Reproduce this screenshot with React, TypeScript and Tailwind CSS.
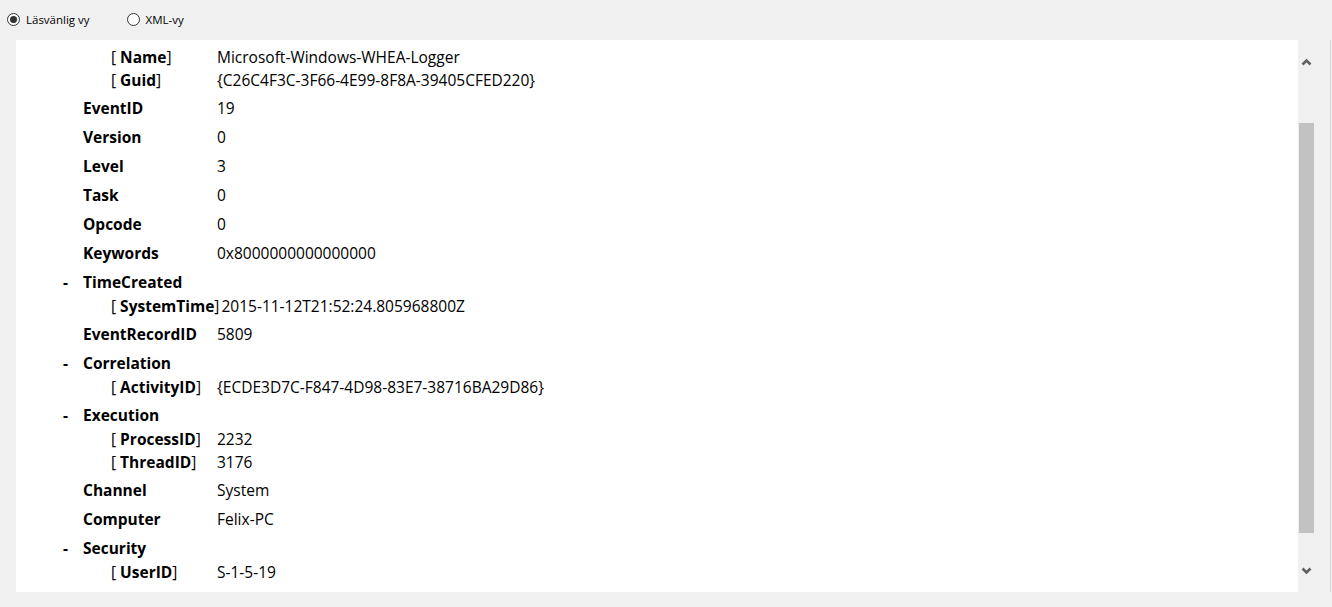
import React from "react";

type Child = { label: string; value: string };
type Item = { label: string; value?: string; dash?: boolean; children?: Child[] };

const items: Item[] = [
  { label: "EventID", value: "19" },
  { label: "Version", value: "0" },
  { label: "Level", value: "3" },
  { label: "Task", value: "0" },
  { label: "Opcode", value: "0" },
  { label: "Keywords", value: "0x8000000000000000" },
  { label: "TimeCreated", dash: true, children: [{ label: "SystemTime", value: "2015-11-12T21:52:24.805968800Z" }] },
  { label: "EventRecordID", value: "5809" },
  { label: "Correlation", dash: true, children: [{ label: "ActivityID", value: "{ECDE3D7C-F847-4D98-83E7-38716BA29D86}" }] },
  {
    label: "Execution",
    dash: true,
    children: [
      { label: "ProcessID", value: "2232" },
      { label: "ThreadID", value: "3176" },
    ],
  },
  { label: "Channel", value: "System" },
  { label: "Computer", value: "Felix-PC" },
  { label: "Security", dash: true, children: [{ label: "UserID", value: "S-1-5-19" }] },
];

const font = { fontFamily: '"Open Sans", "Noto Sans", sans-serif' };

function ChildRow({ c }: { c: Child }) {
  return (
    <div className="flex h-[23px] items-center">
      <div className="pl-[95px] min-w-[201px] pr-[2px] whitespace-nowrap">
        <span>[ </span>
        <span className="font-bold">{c.label}</span>
        <span>]</span>
      </div>
      <div className="whitespace-nowrap">{c.value}</div>
    </div>
  );
}

function Radio({ checked, label }: { checked?: boolean; label: string }) {
  return (
    <div className="flex items-center gap-[6px]">
      <div className="w-[13px] h-[13px] rounded-full border border-[#333] bg-white flex items-center justify-center">
        {checked && <div className="w-[7px] h-[7px] rounded-full bg-[#333]" />}
      </div>
      <span className="text-[11.5px] text-black">{label}</span>
    </div>
  );
}

function Chevron({ up }: { up?: boolean }) {
  return (
    <svg width="11" height="8" viewBox="0 0 11 8">
      <polyline
        points={up ? "1.5,6.5 5.5,2.5 9.5,6.5" : "1.5,1.5 5.5,5.5 9.5,1.5"}
        fill="none"
        stroke="#606060"
        strokeWidth="2.6"
      />
    </svg>
  );
}

export default function App() {
  return (
    <div className="w-[1332px] h-[607px] bg-[#f0f0f0] flex flex-col overflow-hidden" style={font}>
      <div className="h-[40px] flex items-start pt-[11px] pl-[7px] gap-[37px]">
        <Radio checked label="Läsvänlig vy" />
        <Radio label="XML-vy" />
      </div>
      <div className="flex h-[552px] ml-[16px]">
        <div className="flex-1 bg-white text-[15.5px] text-black pt-[6px]">
          <ChildRow c={{ label: "Name", value: "Microsoft-Windows-WHEA-Logger" }} />
          <ChildRow c={{ label: "Guid", value: "{C26C4F3C-3F66-4E99-8F8A-39405CFED220}" }} />
          <div className="h-[4px]" />
          {items.map((it) => (
            <div key={it.label} className="pb-[4px]">
              <div className="flex h-[25px] items-center">
                <div className="w-[67px] pl-[47px] font-bold">{it.dash ? "-" : ""}</div>
                <div className="w-[134px] font-bold whitespace-nowrap">{it.label}</div>
                <div className="whitespace-nowrap">{it.value}</div>
              </div>
              {it.children?.map((c) => <ChildRow key={c.label} c={c} />)}
            </div>
          ))}
        </div>
        <div className="w-[17px] flex flex-col bg-[#f0f0f0]">
          <div className="h-[43px] flex items-center justify-center">
            <Chevron up />
          </div>
          <div className="h-[40px]" />
          <div className="h-[410px] mx-[1px] bg-[#c2c2c2]" />
          <div className="flex-1" />
          <div className="h-[43px] flex items-center justify-center">
            <Chevron />
          </div>
        </div>
        <div className="w-[15px] bg-[#f0f0f0]" />
        <div className="w-[2px] border-l border-[#d9d9d9] bg-[#f0f0f0]" />
      </div>
    </div>
  );
}
